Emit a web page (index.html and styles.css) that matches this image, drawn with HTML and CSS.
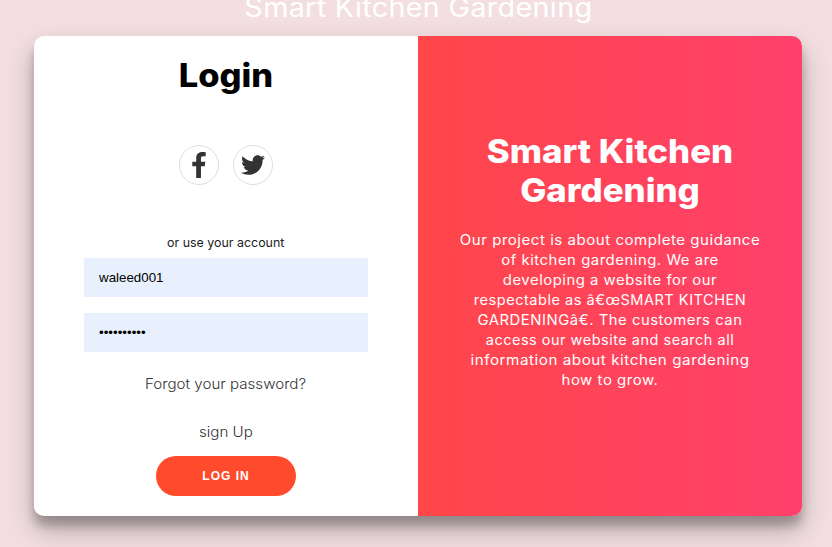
FILE: index.html
```html
<!DOCTYPE html>
<html lang="en">
<head>
<meta charset="utf-8">
<title>Smart Kitchen Gardening</title>
<link rel="stylesheet" href="styles.css">
</head>
<body>
<header class="site-title"><span>Smart Kitchen Gardening</span></header>
<main class="card">
  <form class="login">
    <h1 class="login-title">Login</h1>
    <div class="social">
      <a class="social-link" aria-label="Facebook"><svg class="fb" viewBox="0 0 264 512"><path d="M215.8 85H264V3.600C255.700 2.500 227.100 0 193.800 0 124.300 0 76.700 42.400 76.700 120.300V192H0v91h76.700v229h94V283h73.600l11.700-91h-85.300v-62.700c0-26.300 7.300-44.300 45.100-44.300z"/></svg></a>
      <a class="social-link" aria-label="Twitter"><svg class="tw" viewBox="0 0 512 512"><path d="M459.370 151.716c.325 4.548.325 9.097.325 13.645 0 138.720-105.583 298.558-298.558 298.558-59.452 0-114.680-17.219-161.137-47.106 8.447.974 16.568 1.299 25.340 1.299 49.055 0 94.213-16.568 130.274-44.832-46.132-.975-84.792-31.188-98.112-72.772 6.498.974 12.995 1.624 19.818 1.624 9.421 0 18.843-1.300 27.614-3.573-48.081-9.747-84.143-51.980-84.143-102.985v-1.299c13.969 7.797 30.214 12.670 47.431 13.319-28.264-18.843-46.781-51.005-46.781-87.391 0-19.492 5.197-37.360 14.294-52.954 51.655 63.675 129.300 105.258 216.365 109.807-1.624-7.797-2.599-15.918-2.599-24.040 0-57.828 46.782-104.934 104.934-104.934 30.213 0 57.502 12.670 76.670 33.137 23.715-4.548 46.456-13.320 66.599-25.340-7.798 24.366-24.366 44.833-46.132 57.827 21.117-2.273 41.584-8.122 60.426-16.243-14.292 20.791-32.161 39.308-52.628 54.253z"/></svg></a>
    </div>
    <span class="hint">or use your account</span>
    <input class="field" type="text" value="waleed001" aria-label="Username">
    <input class="field" type="password" value="gardening1" aria-label="Password">
    <a class="link forgot">Forgot your password?</a>
    <a class="link signup">sign Up</a>
    <button class="submit" type="button">Log In</button>
  </form>
  <section class="about">
    <h1 class="about-title"><span>Smart Kitchen</span><span>Gardening</span></h1>
    <p class="about-text">
      <span class="l1">Our project is about complete guidance</span>
      <span class="l2">of kitchen gardening. We are</span>
      <span class="l3">developing a website for our</span>
      <span class="l4">respectable as â€œSMART KITCHEN</span>
      <span class="l5">GARDENINGâ€. The customers can</span>
      <span class="l6">access our website and search all</span>
      <span class="l7">information about kitchen gardening</span>
      <span class="l8">how to grow.</span>
    </p>
  </section>
</main>
</body>
</html>
```

FILE: styles.css
```css
* { box-sizing: border-box; }
body {
  margin: 0;
  height: 547px;
  overflow: hidden;
  background: #f3dfe1;
  font-family: Inter, "Open Sans", sans-serif;
}
.site-title {
  height: 36px;
  padding-left: 4px;
  display: flex;
  justify-content: center;
  color: #fff;
  font-size: 26.500px;
  line-height: 34px;
  white-space: nowrap;
}
.site-title span { margin-top: -10px; letter-spacing: .3px; transform: scaleX(1.085); }
.card {
  width: 768px;
  height: 480px;
  margin-left: 34px;
  display: flex;
  border-radius: 10px;
  overflow: hidden;
  background: #fff;
  box-shadow: 0 14px 28px rgba(0,0,0,.25), 0 10px 10px rgba(0,0,0,.22);
}
.login {
  width: 384px;
  padding: 20px 50px;
  display: flex;
  flex-direction: column;
  align-items: center;
}
.login-title { margin: 0; font-size: 32px; line-height: 39px; font-weight: 800; color: #000; transform: scaleX(1.075); }
.social { display: flex; gap: 14px; margin-top: 50px; }
.social-link {
  width: 40px;
  height: 40px;
  display: flex;
  align-items: center;
  justify-content: center;
  border: 1px solid #ddd;
  border-radius: 50%;
}
.social-link svg { fill: #333; }
.fb { width: 14px; height: 26px; }
.tw { width: 24px; height: 24px; }
.hint { margin-top: 50px; font-size: 12px; line-height: 15px; color: #222; transform: scaleX(1.035); }
.field {
  width: 284px;
  height: 39px;
  margin: 8px 0;
  padding: 0 15px;
  border: 0;
  background: #e8f0fe;
  color: #000;
  font: 13.333px "Liberation Sans", sans-serif;
}
.link { font-size: 14px; line-height: 18px; font-weight: 300; color: #333; white-space: nowrap; transform: scaleX(1.08); }
.forgot { margin-top: 15px; }
.signup { margin-top: 30px; }
.submit {
  width: 140px;
  height: 40px;
  margin-top: 15px;
  flex: none;
  border: 0;
  border-radius: 20px;
  background: #ff4b2b;
  color: #fff;
  font: bold 12px "Liberation Sans", sans-serif;
  letter-spacing: 1px;
  text-transform: uppercase;
}
.about {
  width: 384px;
  padding-top: 96px;
  color: #fff;
  text-align: center;
  white-space: nowrap;
  background: linear-gradient(to right, #ff4649, #ff416c);
}
.about-title { margin: 0; font-size: 32px; line-height: 39px; font-weight: 800; }
.about-title span, .about-text span { display: block; }
.about-title span { transform: scaleX(1.087); }
.about-text { margin: 20px 0 0; font-size: 14px; line-height: 20px; letter-spacing: .5px; }
.l1 { transform: scaleX(1.073); }
.l2 { transform: scaleX(1.063); }
.l3 { transform: scaleX(1.06); }
.l4 { transform: scaleX(1.038); }
.l5 { transform: scaleX(1.06); }
.l6 { transform: scaleX(1.033); }
.l7 { transform: scaleX(1.086); }
.l8 { transform: scaleX(1.067); }
```
